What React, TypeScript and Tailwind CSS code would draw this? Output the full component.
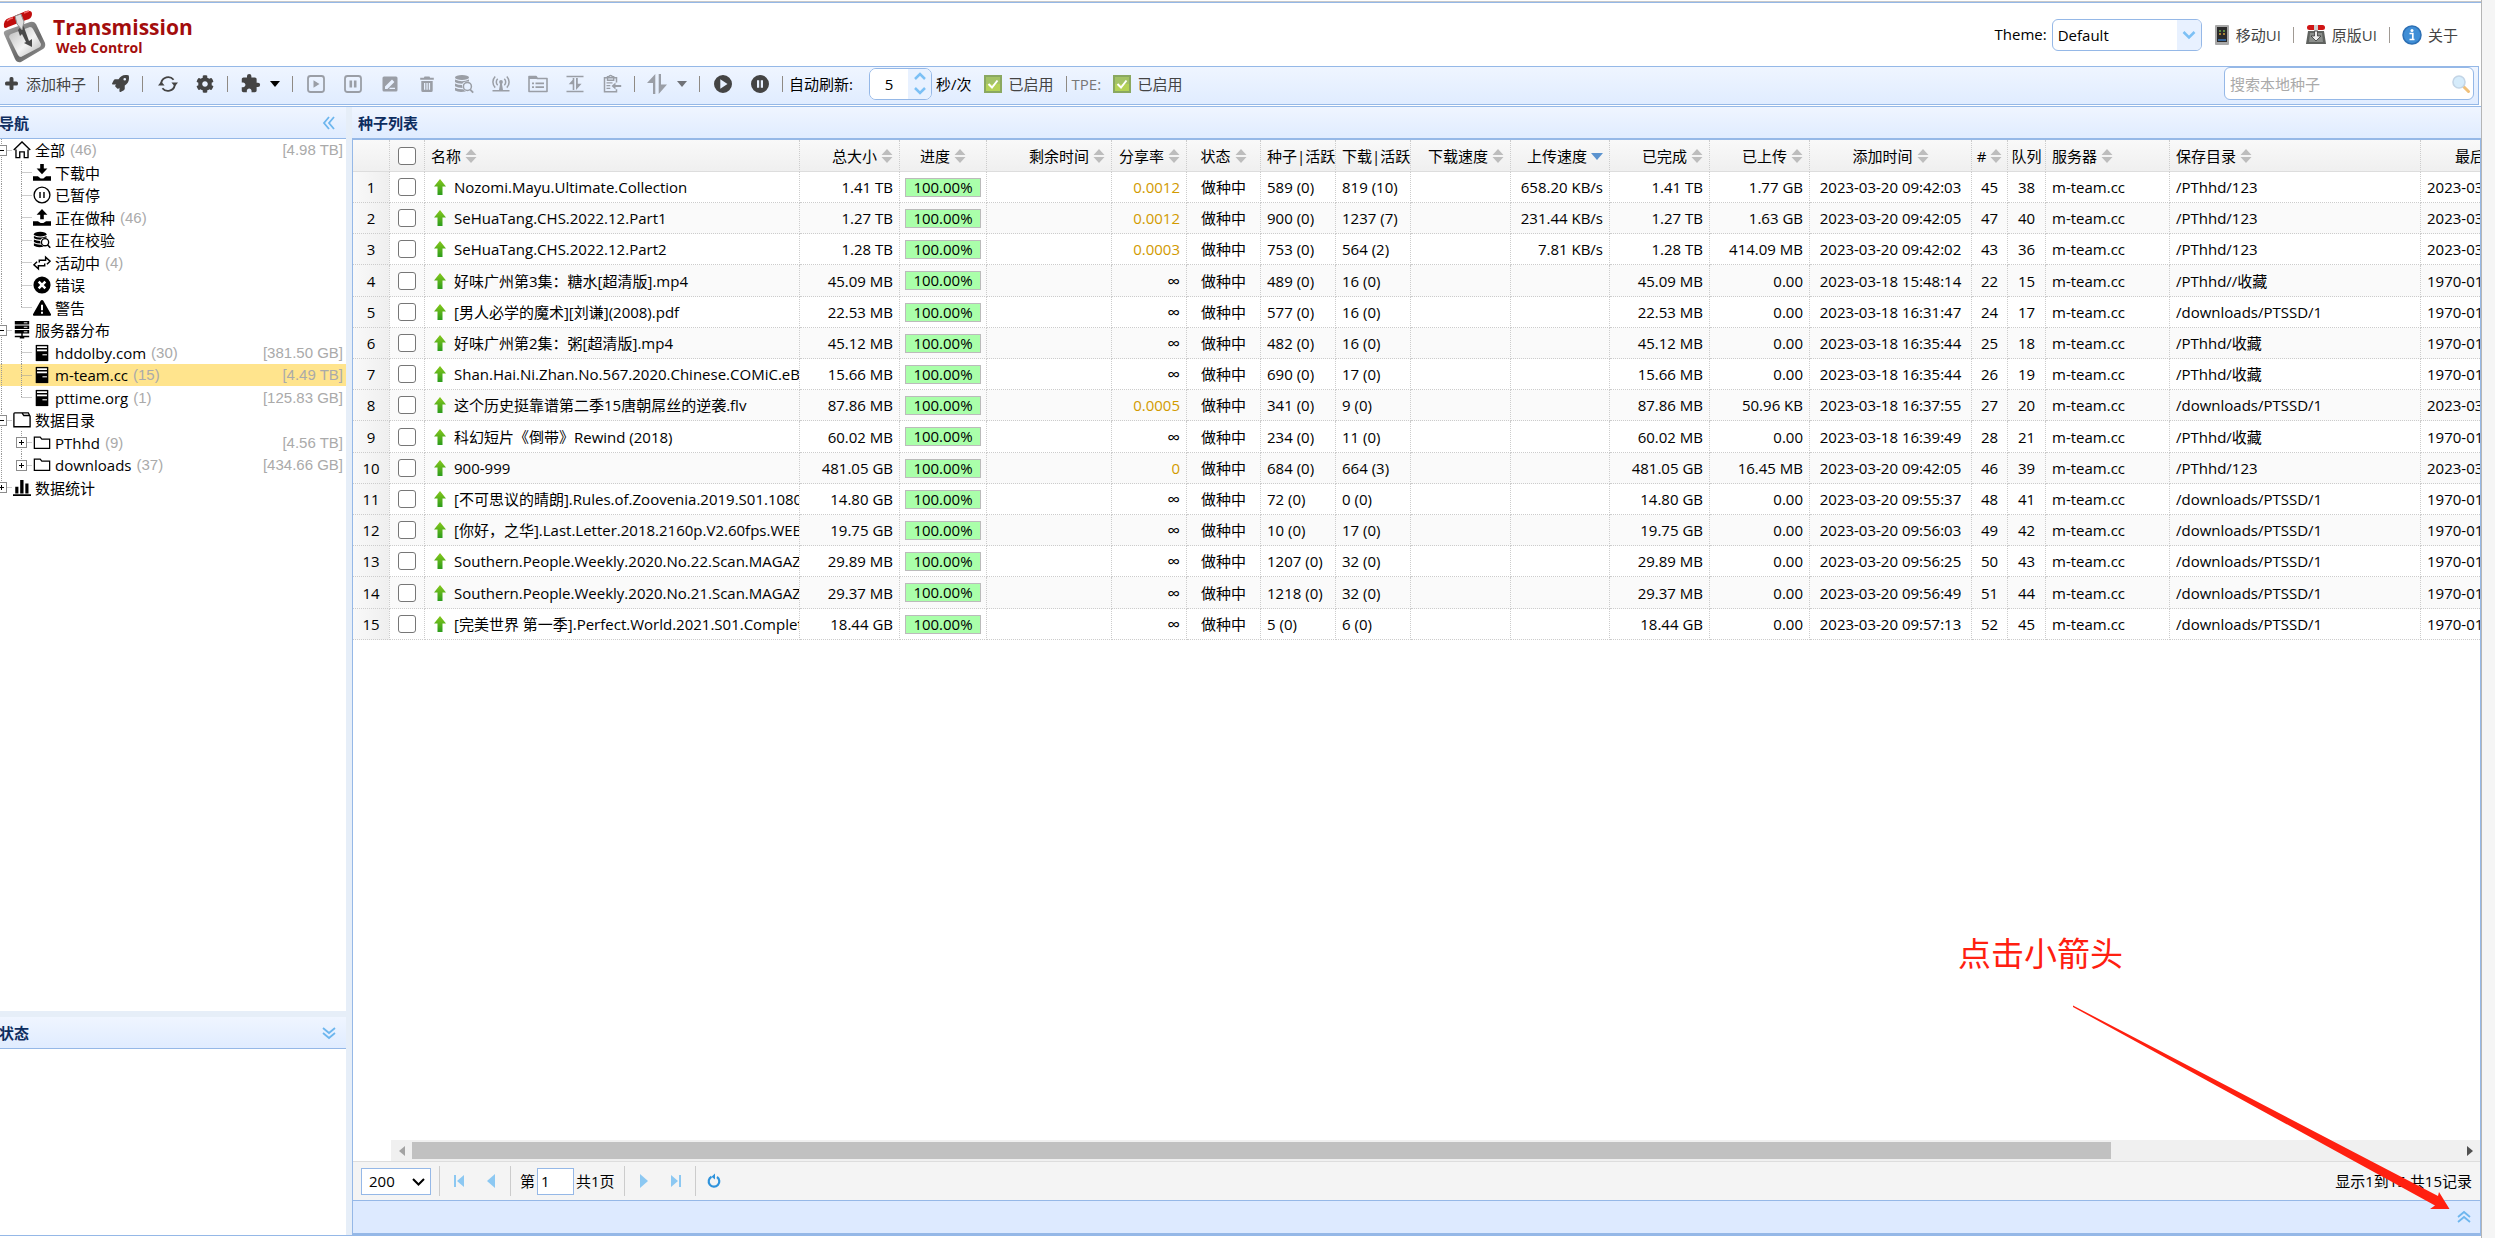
import React from "react";
import { FaCog, FaPlus, FaRocket } from "react-icons/fa";
import { MdExtension } from "react-icons/md";

type Align = "left" | "center" | "right";

/* ---------- icons ---------- */

function Icon({ size = 20, children }: { size?: number; children: React.ReactNode }) {
  return (
    <svg width={size} height={size} viewBox="0 0 20 20" fill="currentColor" className="block shrink-0" aria-hidden="true">
      {children}
    </svg>
  );
}

const icons = {
  refresh: (
    <Icon>
      <g fill="none" stroke="currentColor" strokeWidth="1.8">
        <path d="M3.2 9A7 7 0 0 1 15.6 5.800" />
        <path d="M16.800 11A7 7 0 0 1 4.400 14.200" />
      </g>
      <path d="M0 11.500 3.200 7.500l3.400 4zM20 8.500 16.800 12.500l-3.400-4z" />
    </Icon>
  ),
  play: (
    <Icon>
      <rect x="2" y="2" width="16" height="16" rx="2.5" fill="none" stroke="currentColor" strokeWidth="1.8" />
      <path d="M7.5 6.2v7.6l6-3.8z" />
    </Icon>
  ),
  pause: (
    <Icon>
      <rect x="2" y="2" width="16" height="16" rx="2.5" fill="none" stroke="currentColor" strokeWidth="1.8" />
      <path d="M6.5 6.5h2.6v7H6.5zM10.9 6.5h2.6v7h-2.6z" />
    </Icon>
  ),
  edit: (
    <Icon>
      <path fillRule="evenodd" d="M4 2.5h12A1.5 1.5 0 0 1 17.5 4v12a1.5 1.5 0 0 1-1.5 1.5H4A1.5 1.5 0 0 1 2.5 16V4A1.5 1.5 0 0 1 4 2.500zM5 12.600V15h2.400l7-7L12 5.600zM9.500 13.700V15H15v-1.300z" />
    </Icon>
  ),
  trash: (
    <Icon>
      <path fillRule="evenodd" d="M7.500 2.500h5l.6 1.300h3.700v2H3.200v-2h3.700zM4.300 7h11.400v9.500a1.500 1.500 0 0 1-1.500 1.500H5.800a1.500 1.500 0 0 1-1.500-1.500zM7 9v6.800h1.300V9zm2.400 0v6.800h1.300V9zm2.400 0v6.800h1.300V9z" />
    </Icon>
  ),
  recheck: (
    <Icon>
      <ellipse cx="8" cy="3.500" rx="7" ry="2.600" />
      <path d="M1 5.500q7 3.500 14 0v2Q9.500 7 8.300 9.700 3 9.500 1 8zM1 9.500q3 1.600 7 1.600 0 1.800.6 2.900Q3.500 14 1 12.300zM1 13.700q3.500 1.700 8.300 1.500 1 1.500 2.600 2.300Q4.500 18.800 1 16.500z" />
      <circle cx="13.400" cy="12.400" r="4" fill="none" stroke="currentColor" strokeWidth="1.500" />
      <path d="m16 15.300 3.200 3.300" stroke="currentColor" strokeWidth="1.800" />
    </Icon>
  ),
  tracker: (
    <Icon>
      <circle cx="10" cy="8" r="1.900" />
      <path d="M9.200 9h1.600l1.200 7h6.500v1.500h-17V16H8z" />
      <g fill="none" stroke="currentColor" strokeWidth="1.500">
        <path d="M6.700 11.300a4.600 4.600 0 0 1 0-6.600M13.300 4.700a4.600 4.600 0 0 1 0 6.600M4.200 13.600a8 8 0 0 1 0-11.200M15.800 2.400a8 8 0 0 1 0 11.200" />
      </g>
    </Icon>
  ),
  attributes: (
    <Icon>
      <path d="M1 17.500V2.500h7l1.300 2H19v13z" fill="none" stroke="currentColor" strokeWidth="1.600" strokeLinejoin="round" />
      <path d="M1 2.500h7l1.300 2.500H1zM4 8.500h2v1.700H4zM7.500 8.500H16v1.700H7.500zM4 12.300h2V14H4zM7.500 12.300H16V14H7.500z" />
    </Icon>
  ),
  location: (
    <Icon>
      <path d="M1.500 1.700h17v1.500h-17zM1.500 16.800h17v1.500h-17zM7.700 4v12H9.300V4zM9.300 4 3.700 10.300h5.600zM11 4v12l5.600-6.300h-3.800V4z" />
    </Icon>
  ),
  paste: (
    <Icon>
      <path d="M14.500 8.500V3.800h-12v14h12v-2.500" fill="none" stroke="currentColor" strokeWidth="1.500" />
      <path d="M5.500 2.800h1.300a1.900 1.900 0 0 1 3.600 0h1.300v3.400H5.500z" fill="none" stroke="currentColor" strokeWidth="1.400" />
      <path d="M4.500 8.200h6v1.200h-6zM4.500 11h3.800v1.200H4.500zM4.500 13.800h3.800V15H4.500zM9.500 12l4-3.600v2.500h5.700v2.200h-5.700v2.500z" />
    </Icon>
  ),
  queue: (
    <Icon>
      <path d="M8.300 0v20H6V9H0zM11.700 0v20L20 10.500h-6V0z" />
    </Icon>
  ),
  playAll: (
    <Icon>
      <path fillRule="evenodd" d="M10 1a9 9 0 1 0 0 18 9 9 0 0 0 0-18zM7.300 5.200 14.500 10l-7.200 4.800z" />
    </Icon>
  ),
  pauseAll: (
    <Icon>
      <path fillRule="evenodd" d="M10 1a9 9 0 1 0 0 18 9 9 0 0 0 0-18zM7 6.300h2.200v7.400H7zm3.800 0H13v7.400h-2.200z" />
    </Icon>
  ),
  home: (
    <Icon size={18}>
      <path d="M.8 10 10 1l9.200 9M3.300 9.500v9h4.200V12h5v6.500h4.200v-9" fill="none" stroke="currentColor" strokeWidth="1.500" />
    </Icon>
  ),
  download: (
    <Icon size={18}>
      <path d="M8 0h4v5h4l-6 6.500L4 5h4zM0 13.500h5.500l3 2.500h3l3-2.500H20v5H0z" />
    </Icon>
  ),
  paused: (
    <Icon size={18}>
      <circle cx="10" cy="10" r="8.800" fill="none" stroke="currentColor" strokeWidth="1.500" />
      <path d="M7 6.700h1.600v6.600H7zM11.400 6.700H13v6.600h-1.600z" />
    </Icon>
  ),
  upload: (
    <Icon size={18}>
      <path d="M8 11.500h4v-5h4L10 0 4 6.500h4zM0 13.500h5.500l3 2h3l3-2H20v5H0z" />
    </Icon>
  ),
  active: (
    <Icon size={18}>
      <path d="M7 9.500V7h7V3.500L19 8l-3.500 3.500M13 10.500V13H6v3.500L1 12l3.500-3.500" fill="none" stroke="currentColor" strokeWidth="1.600" />
    </Icon>
  ),
  error: (
    <Icon size={18}>
      <circle cx="10" cy="10" r="9.500" />
      <path d="m6.300 6.300 7.400 7.400m0-7.400-7.400 7.400" stroke="#fff" strokeWidth="2.800" />
    </Icon>
  ),
  warning: (
    <Icon size={18}>
      <path d="M10 1q1 0 1.500 1L20 17q.5 1.500-1 1.500H1Q-.5 18.500 0 17L8.500 2Q9 1 10 1z" />
      <path d="M10 6.500v6m0 1.800v2.200" stroke="#fff" strokeWidth="2.200" />
    </Icon>
  ),
  servers: (
    <Icon size={18}>
      <path d="M2 0h16v4H2zM2 5h16v4H2zM2 10h16v4H2zM9.200 14h1.600v2.500H18v1.500h-5.500v1.500h-5V18H2v-1.500h7.200z" />
      <path d="M12 2h4M12 7h4M12 12h4" stroke="#fff" strokeWidth="1" />
    </Icon>
  ),
  server: (
    <Icon size={18}>
      <path d="M3 1h14v18H3z" />
      <path d="M4.500 3.500h11M4.500 7h11" stroke="#fff" strokeWidth="2" />
      <path d="M10.500 12h5" stroke="#fff" strokeWidth="1.200" />
    </Icon>
  ),
  folderOpen: (
    <Icon size={18}>
      <path d="M1 17.500V3q0-1 1-1h8l2 3h6q1 0 1 1v11.500zM10 2h7l1.500 3" fill="none" stroke="currentColor" strokeWidth="1.500" />
    </Icon>
  ),
  folder: (
    <Icon size={18}>
      <path d="M1.500 16V3.500H8l1.800 2.200h8.700V16z" fill="none" stroke="currentColor" strokeWidth="1.400" />
    </Icon>
  ),
  stats: (
    <Icon size={18}>
      <path d="M2.500 8.500H6V16H2.500zM8 1h3.700v15H8zM13.700 5h3.500v11h-3.500zM0 17h20v1.800H0z" />
    </Icon>
  ),
};

function Logo() {
  return (
    <svg width="46" height="54" viewBox="0 0 46 54" className="block" aria-hidden="true">
      <defs>
        <linearGradient id="logoPlate" x1="0" y1="0" x2="1" y2="1">
          <stop offset="0" stopColor="#b9b9b9" />
          <stop offset="0.55" stopColor="#f4f4f4" />
          <stop offset="1" stopColor="#b5b5b5" />
        </linearGradient>
        <linearGradient id="logoFrame" x1="0" y1="0" x2="1" y2="1">
          <stop offset="0" stopColor="#a8a8a8" />
          <stop offset="0.6" stopColor="#6a6a6a" />
          <stop offset="1" stopColor="#9a9a9a" />
        </linearGradient>
      </defs>
      <path d="M6 20 29 12q4-1 6 2l9 19q1 4-2 6L20 52q-4 1-6-3L3 24q-1-3 3-4z" fill="url(#logoFrame)" />
      <path d="m10 24 19-7q2 0 3 2l8 15q0 2-1 3L20 47q-2 0-3-2L8 27q0-2 2-3z" fill="url(#logoPlate)" />
      <path d="m17 20 5-6 2 6 4 11 3-2v8l-8-4 2-1-4-8-2 2z" fill="#4a4a4a" />
      <path d="M3 17q-1-7 5-9l3-1 14-6q6-1 6 3 0 5-6 6L7 17q-3 2-4 0z" fill="#c00d0d" />
      <path d="M6 11q3-3 6-3M23 3l5-2" stroke="#f26a6a" strokeWidth="1.500" fill="none" />
      <path d="m14 6 6-2 3 8-2 8-5-6z" fill="#dedede" stroke="#8f8f8f" />
    </svg>
  );
}

function Chevrons({ dir }: { dir: "left" | "up" | "down" }) {
  const d = {
    left: "M8 2 3 8l5 6M13 2 8 8l5 6",
    up: "M2 8l6-5 6 5M2 13l6-5 6 5",
    down: "M2 3l6 5 6-5M2 8l6 5 6-5",
  }[dir];
  return (
    <svg width="16" height="16" viewBox="0 0 16 16" className="block" aria-hidden="true">
      <path d={d} fill="none" stroke="#6db6ee" strokeWidth="1.800" />
    </svg>
  );
}

function SortIcon({ active }: { active?: boolean }) {
  return (
    <svg width="12" height="14" viewBox="0 0 12 14" className="block shrink-0" aria-hidden="true">
      {active ? <path d="M0 4h12L6 11z" fill="#5b93cf" /> : <path d="M6 0l5.500 6H.5zM6 14l5.500-6H.5z" fill="#bdbdbd" />}
    </svg>
  );
}

function UpArrow() {
  return (
    <svg width="12" height="16" viewBox="0 0 12 16" className="block shrink-0" aria-hidden="true">
      <defs>
        <linearGradient id="seedArrow" x1="0" y1="0" x2="0" y2="1">
          <stop offset="0" stopColor="#86c81b" />
          <stop offset="1" stopColor="#2c9c1c" />
        </linearGradient>
      </defs>
      <path d="M6 0 12 7.500H8.500V16h-5V7.500H0z" fill="url(#seedArrow)" />
    </svg>
  );
}

function TickBox() {
  return (
    <svg width="18" height="18" viewBox="0 0 18 18" className="block" aria-hidden="true">
      <rect x="1" y="1" width="16" height="16" fill="#b4d257" stroke="#8aa860" strokeWidth="2" />
      <rect x="2" y="2" width="14" height="7" fill="#a3c266" />
      <path d="m4.500 9 3.500 3.500 5.500-7" fill="none" stroke="#fff" strokeWidth="2" />
    </svg>
  );
}

/* ---------- header ---------- */

function HeaderLink({ icon, text }: { icon: React.ReactNode; text: string }) {
  return (
    <a href="#" className="flex items-center gap-[6px] text-[#444]">
      {icon}
      {text}
    </a>
  );
}

function Sep() {
  return <span className="mx-[12px] h-[16px] w-px shrink-0 bg-[#a09a94]" />;
}

function Header() {
  return (
    <header className="flex h-[63px] shrink-0 items-start justify-between pl-px pr-[23px]">
      <div className="flex items-start gap-[6px] pt-[7px]">
        <Logo />
        <h1 className="pt-[6px] font-bold text-[#a30d0d]">
          <span className="block text-[21px] leading-[23px]">Transmission</span>
          <span className="block pl-[3px] text-[14px] leading-[18px]">Web Control</span>
        </h1>
      </div>
      <div className="flex items-center pt-[16px]">
        <label htmlFor="theme" className="mr-[5px] pb-[3px]">
          Theme:
        </label>
        <div className="relative mr-[12px] h-[32px] w-[150px] overflow-hidden rounded-[6px] border border-[#95b8e7] bg-white">
          <select id="theme" className="h-full w-full appearance-none bg-transparent pl-[5px] outline-none">
            <option>Default</option>
          </select>
          <span className="pointer-events-none absolute inset-y-0 right-0 flex w-[24px] items-center justify-center bg-[#e8f1ff]">
            <svg width="14" height="10" viewBox="0 0 14 10" aria-hidden="true">
              <path d="m1.500 2 5.500 5.500L12.500 2" fill="none" stroke="#7cc0f5" strokeWidth="2.500" />
            </svg>
          </span>
        </div>
        <HeaderLink
          text="移动UI"
          icon={
            <svg width="16" height="20" viewBox="0 0 16 20" aria-hidden="true">
              <rect x="1" width="14" height="20" rx="1" fill="#a9a9a9" />
              <rect x="3" y="2" width="10" height="15" fill="#2b2b2b" />
              <path d="M5 6h2M9 6h2" stroke="#6fae4c" strokeWidth="1.500" />
              <path d="M5 9h2M9 9h2" stroke="#d7a23c" strokeWidth="1.500" />
              <path d="M4 15h8" stroke="#3c7cc4" strokeWidth="1.500" />
            </svg>
          }
        />
        <Sep />
        <HeaderLink
          text="原版UI"
          icon={
            <svg width="20" height="20" viewBox="0 0 20 20" aria-hidden="true">
              <path d="M2 6h16l2 13H0z" fill="#5f625f" />
              <path d="M4 8h12l1 9H3z" fill="#8b8e8b" />
              <rect x="1" width="18" height="5" rx="2.500" fill="#d01515" />
              <rect x="8" width="4" height="10" fill="#cfcfcf" />
              <path d="M8.500 6h3v5H15l-5 5-5-5h3.500z" fill="#eee" stroke="#333" strokeWidth=".8" />
            </svg>
          }
        />
        <Sep />
        <HeaderLink
          text="关于"
          icon={
            <svg width="20" height="20" viewBox="0 0 20 20" aria-hidden="true">
              <circle cx="10" cy="10" r="9" fill="#3f8ed6" stroke="#2c6fb4" strokeWidth="1.500" />
              <circle cx="10" cy="5.500" r="1.500" fill="#fff" />
              <path d="M7.500 8.500h3.300v6h1.700M7.500 14.500h5" fill="none" stroke="#fff" strokeWidth="1.700" />
            </svg>
          }
        />
      </div>
    </header>
  );
}

/* ---------- toolbar ---------- */

function Tool({ label, children, disabled }: { label: string; children: React.ReactNode; disabled?: boolean }) {
  return (
    <button
      type="button"
      aria-label={label}
      disabled={disabled}
      className="flex h-[28px] w-[37px] shrink-0 items-center justify-center text-[#444] disabled:text-[#9a9ea6]"
    >
      {children}
    </button>
  );
}

function Bar() {
  return <span className="h-[16px] w-px shrink-0 bg-[#8f8a84]" />;
}

function Caret({ color }: { color: string }) {
  return (
    <svg width="10" height="6" viewBox="0 0 10 6" className="block shrink-0" aria-hidden="true">
      <path d="M0 0h10L5 6z" fill={color} />
    </svg>
  );
}

function Toolbar() {
  return (
    <div className="mr-[2px] flex h-[39px] shrink-0 items-center border-y border-r border-[#95b8e7] bg-linear-to-b from-[#eff5ff] to-[#e0ecff] pb-[4px]">
      <button type="button" className="ml-[5px] mr-[12px] flex items-center gap-[8px] text-[#444]">
        <FaPlus size={13} strokeWidth={60} stroke="currentColor" />
        添加种子
      </button>
      <Bar />
      <div className="mx-[3px]">
        <Tool label="插件">
          <FaRocket size={17} />
        </Tool>
      </div>
      <Bar />
      <div className="ml-[6px] mr-[4px] flex">
        <Tool label="刷新">{icons.refresh}</Tool>
        <Tool label="设置">
          <FaCog size={18} />
        </Tool>
      </div>
      <Bar />
      <button type="button" aria-label="扩展" className="mx-[12px] flex items-center gap-[9px] text-[#444]">
        <MdExtension size={21} />
        <Caret color="#000" />
      </button>
      <Bar />
      <div className="mx-[4px] flex">
        <Tool label="开始" disabled>{icons.play}</Tool>
        <Tool label="暂停" disabled>{icons.pause}</Tool>
        <Tool label="重命名" disabled>{icons.edit}</Tool>
        <Tool label="删除" disabled>{icons.trash}</Tool>
        <Tool label="校验" disabled>{icons.recheck}</Tool>
        <Tool label="获取更多节点" disabled>{icons.tracker}</Tool>
        <Tool label="属性" disabled>{icons.attributes}</Tool>
        <Tool label="变更目录" disabled>{icons.location}</Tool>
        <Tool label="复制路径" disabled>{icons.paste}</Tool>
      </div>
      <Bar />
      <button type="button" aria-label="队列" disabled className="mx-[12px] flex items-center gap-[10px] text-[#9a9ea6]">
        {icons.queue}
        <Caret color="#707277" />
      </button>
      <Bar />
      <div className="mx-[4px] flex">
        <Tool label="全部开始">{icons.playAll}</Tool>
        <Tool label="全部暂停">{icons.pauseAll}</Tool>
      </div>
      <Bar />
      <label htmlFor="interval" className="ml-[6px] mr-[4px] w-[76px] whitespace-nowrap">
        自动刷新:
      </label>
      <div className="mr-[4px] flex h-[32px] w-[63px] shrink-0 overflow-hidden rounded-[7px] border border-[#95b8e7] bg-white">
        <input id="interval" defaultValue="5" className="w-[38px] bg-white text-center outline-none" />
        <div className="flex flex-1 flex-col bg-[#e8f1ff]">
          <button type="button" aria-label="增加" className="flex flex-1 items-center justify-center">
            <svg width="14" height="10" viewBox="0 0 14 10" aria-hidden="true">
              <path d="M2 8l5-5 5 5" fill="none" stroke="#7cc0f5" strokeWidth="2.500" />
            </svg>
          </button>
          <button type="button" aria-label="减少" className="flex flex-1 items-center justify-center">
            <svg width="14" height="10" viewBox="0 0 14 10" aria-hidden="true">
              <path d="M2 2l5 5 5-5" fill="none" stroke="#7cc0f5" strokeWidth="2.500" />
            </svg>
          </button>
        </div>
      </div>
      <span className="mr-[12px] whitespace-nowrap">秒/次</span>
      <button type="button" className="mr-[12px] flex items-center gap-[7px] whitespace-nowrap text-[#444]">
        <TickBox />
        已启用
      </button>
      <Bar />
      <span className="ml-[5px] mr-[11px] w-[30px] whitespace-nowrap text-[#777]">TPE:</span>
      <button type="button" className="flex items-center gap-[7px] whitespace-nowrap text-[#444]">
        <TickBox />
        已启用
      </button>
      <div className="ml-auto mr-[4px] flex h-[33px] w-[250px] items-center rounded-[6px] border border-[#95b8e7] bg-white pr-[2px]">
        <input
          aria-label="搜索本地种子"
          placeholder="搜索本地种子"
          className="min-w-0 flex-1 bg-transparent pl-[5px] outline-none placeholder:text-[#aaa]"
        />
        <button type="button" aria-label="搜索">
          <svg width="20" height="20" viewBox="0 0 20 20" className="block" aria-hidden="true">
            <path d="m12.500 12.500 5 5" stroke="#f0c07a" strokeWidth="3" strokeLinecap="round" />
            <circle cx="8" cy="8" r="6" fill="#d6ecfb" stroke="#c3d5e6" strokeWidth="1.600" />
          </svg>
        </button>
      </div>
    </div>
  );
}

/* ---------- navigation tree ---------- */

type Node = {
  level: 0 | 1;
  icon: React.ReactNode;
  text: string;
  count?: number;
  size?: string;
  box?: "plus" | "minus";
  last?: boolean;
  selected?: boolean;
};

const nodes: Node[] = [
  { level: 0, icon: icons.home, text: "全部", count: 46, size: "4.98 TB", box: "minus" },
  { level: 1, icon: icons.download, text: "下载中" },
  { level: 1, icon: icons.paused, text: "已暂停" },
  { level: 1, icon: icons.upload, text: "正在做种", count: 46 },
  { level: 1, icon: icons.recheck, text: "正在校验" },
  { level: 1, icon: icons.active, text: "活动中", count: 4 },
  { level: 1, icon: icons.error, text: "错误" },
  { level: 1, icon: icons.warning, text: "警告", last: true },
  { level: 0, icon: icons.servers, text: "服务器分布", box: "minus" },
  { level: 1, icon: icons.server, text: "hddolby.com", count: 30, size: "381.50 GB" },
  { level: 1, icon: icons.server, text: "m-team.cc", count: 15, size: "4.49 TB", selected: true },
  { level: 1, icon: icons.server, text: "pttime.org", count: 1, size: "125.83 GB", last: true },
  { level: 0, icon: icons.folderOpen, text: "数据目录", box: "minus" },
  { level: 1, icon: icons.folder, text: "PThhd", count: 9, size: "4.56 TB", box: "plus" },
  { level: 1, icon: icons.folder, text: "downloads", count: 37, size: "434.66 GB", box: "plus", last: true },
  { level: 0, icon: icons.stats, text: "数据统计", box: "plus", last: true },
];

function TreeLines({ level, box, last }: Pick<Node, "level" | "box" | "last">) {
  const w = level === 0 ? 12 : 32;
  const x = level === 0 ? 1 : 21;
  return (
    <svg width={w} height="23" viewBox={`0 0 ${w} 23`} className="block shrink-0" aria-hidden="true">
      <g stroke="#999" strokeDasharray="1 1" fill="none">
        {level === 1 && <path d="M1.500 0v23" />}
        <path d={last ? `M${x}.5 0v11` : `M${x}.5 0v23`} />
        <path d={`M${x}.5 11.500H${w}`} />
      </g>
      {box && (
        <g fill="none">
          <rect x={x - 5 + 0.5} y="6.500" width="10" height="10" fill="#fff" stroke="#8c8c8c" />
          <path d={`M${x - 2} 11.500h5`} stroke="#000" />
          {box === "plus" && <path d={`M${x}.5 9v5`} stroke="#000" />}
        </g>
      )}
    </svg>
  );
}

function NavTree() {
  return (
    <ul className="flex-1 overflow-hidden bg-white">
      {nodes.map((n) => (
        <li
          key={n.text}
          className={`flex h-[22px] items-center overflow-hidden pr-[3px] leading-[22px] even:h-[23px] ${n.selected ? "bg-[#ffe48d]" : ""}`}
        >
          <TreeLines level={n.level} box={n.box} last={n.last} />
          <span className="flex w-[20px] shrink-0 items-center justify-center text-black">
            <span className="[&>svg]:size-[18px]">{n.icon}</span>
          </span>
          <span className="ml-[3px]">{n.text}</span>
          {n.count !== undefined && (
            <span className="ml-[5px] font-['Liberation_Sans',sans-serif] text-[#aaa]">({n.count})</span>
          )}
          {n.size && <span className="ml-auto font-['Liberation_Sans',sans-serif] text-[#aaa]">[{n.size}]</span>}
        </li>
      ))}
    </ul>
  );
}

function PanelTitle({ title, children, flush }: { title: string; children?: React.ReactNode; flush?: boolean }) {
  return (
    <div
      className={`flex h-[32px] shrink-0 items-center justify-between border-b border-[#95b8e7] bg-linear-to-b from-[#eff5ff] to-[#e0ecff] pr-[9px] ${flush ? "" : "pl-[6px]"}`}
    >
      <h2 className={`font-bold text-[#0e2d5f] ${flush ? "-ml-px" : ""}`}>{title}</h2>
      {children}
    </div>
  );
}

function Sidebar() {
  return (
    <aside className="flex w-[346px] shrink-0 flex-col">
      <nav className="flex min-h-0 flex-1 flex-col">
        <PanelTitle title="导航" flush>
          <button type="button" aria-label="收起导航">
            <Chevrons dir="left" />
          </button>
        </PanelTitle>
        <NavTree />
      </nav>
      <div className="h-[6px] shrink-0 bg-[#e6eef8]" />
      <section className="flex h-[218px] shrink-0 flex-col bg-white">
        <PanelTitle title="状态" flush>
          <button type="button" aria-label="收起状态">
            <Chevrons dir="down" />
          </button>
        </PanelTitle>
      </section>
    </aside>
  );
}

/* ---------- torrent table ---------- */

type Column = { title: string; width: string; align: Align; sort?: "none" | "desc" };

const columns: Column[] = [
  { title: "名称", width: "w-[375px]", align: "left", sort: "none" },
  { title: "总大小", width: "w-[100px]", align: "right", sort: "none" },
  { title: "进度", width: "w-[87px]", align: "center", sort: "none" },
  { title: "剩余时间", width: "w-[125px]", align: "right", sort: "none" },
  { title: "分享率", width: "w-[75px]", align: "right", sort: "none" },
  { title: "状态", width: "w-[74px]", align: "center", sort: "none" },
  { title: "种子|活跃", width: "w-[75px]", align: "left" },
  { title: "下载|活跃", width: "w-[75px]", align: "left" },
  { title: "下载速度", width: "w-[100px]", align: "right", sort: "none" },
  { title: "上传速度", width: "w-[99px]", align: "right", sort: "desc" },
  { title: "已完成", width: "w-[100px]", align: "right", sort: "none" },
  { title: "已上传", width: "w-[100px]", align: "right", sort: "none" },
  { title: "添加时间", width: "w-[162px]", align: "center", sort: "none" },
  { title: "#", width: "w-[36px]", align: "center", sort: "none" },
  { title: "队列", width: "w-[38px]", align: "center" },
  { title: "服务器", width: "w-[124px]", align: "left", sort: "none" },
  { title: "保存目录", width: "w-[251px]", align: "left", sort: "none" },
  { title: "最后活动时间", width: "w-[175px]", align: "center", sort: "none" },
];

// name, size, ratio, seeds, peers, upload speed, uploaded, added, id, queue, folder, last activity
const torrents: string[][] = [
  ["Nozomi.Mayu.Ultimate.Collection", "1.41 TB", "0.0012", "589 (0)", "819 (10)", "658.20 KB/s", "1.77 GB", "2023-03-20 09:42:03", "45", "38", "/PThhd/123", "2023-03-20"],
  ["SeHuaTang.CHS.2022.12.Part1", "1.27 TB", "0.0012", "900 (0)", "1237 (7)", "231.44 KB/s", "1.63 GB", "2023-03-20 09:42:05", "47", "40", "/PThhd/123", "2023-03-20"],
  ["SeHuaTang.CHS.2022.12.Part2", "1.28 TB", "0.0003", "753 (0)", "564 (2)", "7.81 KB/s", "414.09 MB", "2023-03-20 09:42:02", "43", "36", "/PThhd/123", "2023-03-20"],
  ["好味广州第3集：糖水[超清版].mp4", "45.09 MB", "∞", "489 (0)", "16 (0)", "", "0.00", "2023-03-18 15:48:14", "22", "15", "/PThhd//收藏", "1970-01-01"],
  ["[男人必学的魔术][刘谦](2008).pdf", "22.53 MB", "∞", "577 (0)", "16 (0)", "", "0.00", "2023-03-18 16:31:47", "24", "17", "/downloads/PTSSD/1", "1970-01-01"],
  ["好味广州第2集：粥[超清版].mp4", "45.12 MB", "∞", "482 (0)", "16 (0)", "", "0.00", "2023-03-18 16:35:44", "25", "18", "/PThhd/收藏", "1970-01-01"],
  ["Shan.Hai.Ni.Zhan.No.567.2020.Chinese.COMiC.eBook", "15.66 MB", "∞", "690 (0)", "17 (0)", "", "0.00", "2023-03-18 16:35:44", "26", "19", "/PThhd/收藏", "1970-01-01"],
  ["这个历史挺靠谱第二季15唐朝屌丝的逆袭.flv", "87.86 MB", "0.0005", "341 (0)", "9 (0)", "", "50.96 KB", "2023-03-18 16:37:55", "27", "20", "/downloads/PTSSD/1", "2023-03-20"],
  ["科幻短片《倒带》Rewind (2018)", "60.02 MB", "∞", "234 (0)", "11 (0)", "", "0.00", "2023-03-18 16:39:49", "28", "21", "/PThhd/收藏", "1970-01-01"],
  ["900-999", "481.05 GB", "0", "684 (0)", "664 (3)", "", "16.45 MB", "2023-03-20 09:42:05", "46", "39", "/PThhd/123", "2023-03-20"],
  ["[不可思议的晴朗].Rules.of.Zoovenia.2019.S01.1080p", "14.80 GB", "∞", "72 (0)", "0 (0)", "", "0.00", "2023-03-20 09:55:37", "48", "41", "/downloads/PTSSD/1", "1970-01-01"],
  ["[你好，之华].Last.Letter.2018.2160p.V2.60fps.WEB-DL", "19.75 GB", "∞", "10 (0)", "17 (0)", "", "0.00", "2023-03-20 09:56:03", "49", "42", "/downloads/PTSSD/1", "1970-01-01"],
  ["Southern.People.Weekly.2020.No.22.Scan.MAGAZINE", "29.89 MB", "∞", "1207 (0)", "32 (0)", "", "0.00", "2023-03-20 09:56:25", "50", "43", "/downloads/PTSSD/1", "1970-01-01"],
  ["Southern.People.Weekly.2020.No.21.Scan.MAGAZINE", "29.37 MB", "∞", "1218 (0)", "32 (0)", "", "0.00", "2023-03-20 09:56:49", "51", "44", "/downloads/PTSSD/1", "1970-01-01"],
  ["[完美世界 第一季].Perfect.World.2021.S01.Complete", "18.44 GB", "∞", "5 (0)", "6 (0)", "", "0.00", "2023-03-20 09:57:13", "52", "45", "/downloads/PTSSD/1", "1970-01-01"],
];

const textAlign: Record<Align, string> = { left: "text-left", center: "text-center", right: "text-right" };
const justify: Record<Align, string> = { left: "justify-start", center: "justify-center", right: "justify-end" };

const cellBorder = "border-b border-r border-dotted border-[#ccc]";

function Cell({ align, children, className = "" }: { align: Align; children?: React.ReactNode; className?: string }) {
  return <td className={`overflow-hidden whitespace-nowrap px-[6px] ${cellBorder} ${textAlign[align]} ${className}`}>{children}</td>;
}

function Tick({ label }: { label: string }) {
  return (
    <input
      type="checkbox"
      aria-label={label}
      className="mx-auto block size-[18px] appearance-none rounded-[3px] border border-[#767676] bg-white"
    />
  );
}

function headPadding(c: Column) {
  if (c.title === "#" || c.title === "队列") return "px-[3px]";
  return c.sort ? "px-[6px]" : "pl-[6px]";
}

function TorrentTable() {
  return (
    <table className="w-[2243px] table-fixed border-separate border-spacing-0 leading-[20px]">
      <colgroup>
        <col className="w-[37px]" />
        <col className="w-[35px]" />
        {columns.map((c) => (
          <col key={c.title} className={c.width} />
        ))}
      </colgroup>
      <thead>
        <tr className="h-[32px] bg-linear-to-b from-[#f9f9f9] to-[#efefef]">
          <th aria-label="行号" className="border-b border-r border-b-[#ddd] border-r-[#ccc] [border-right-style:dotted]" />
          <th className="border-b border-r border-b-[#ddd] border-r-[#ccc] [border-right-style:dotted]">
            <Tick label="全选" />
          </th>
          {columns.map((c) => (
            <th
              key={c.title}
              className={`overflow-hidden whitespace-nowrap border-b border-r border-b-[#ddd] border-r-[#ccc] font-normal [border-right-style:dotted] ${headPadding(c)}`}
            >
              <span className={`flex items-center gap-[4px] ${justify[c.align]}`}>
                {c.title}
                {c.sort && <SortIcon active={c.sort === "desc"} />}
              </span>
            </th>
          ))}
        </tr>
      </thead>
      <tbody>
        {torrents.map((t, i) => (
          <tr key={t[0]} className="h-[31px] even:bg-[#fafafa] nth-[5n+4]:h-[32px]">
            <td className={`bg-linear-to-r from-[#f9f9f9] to-[#efefef] text-center ${cellBorder}`}>{i + 1}</td>
            <td className={cellBorder}>
              <Tick label={t[0]} />
            </td>
            <td className={`overflow-hidden whitespace-nowrap pl-[9px] ${cellBorder}`}>
              <span className="flex items-center gap-[8px]">
                <UpArrow />
                {t[0]}
              </span>
            </td>
            <Cell align="right">{t[1]}</Cell>
            <td className={`px-[5px] ${cellBorder}`}>
              <span className="block h-[19px] border border-[#bbb] bg-[#aaffaa] text-center leading-[17px]">100.00%</span>
            </td>
            <Cell align="right" />
            <Cell align="right" className={t[2] === "∞" ? "text-[18px]" : "text-[#d29a00]"}>
              {t[2]}
            </Cell>
            <Cell align="center">做种中</Cell>
            <Cell align="left">{t[3]}</Cell>
            <Cell align="left">{t[4]}</Cell>
            <Cell align="right" />
            <Cell align="right">{t[5]}</Cell>
            <Cell align="right">{t[1]}</Cell>
            <Cell align="right">{t[6]}</Cell>
            <Cell align="center">{t[7]}</Cell>
            <Cell align="center">{t[8]}</Cell>
            <Cell align="center">{t[9]}</Cell>
            <Cell align="left">m-team.cc</Cell>
            <Cell align="left">{t[10]}</Cell>
            <Cell align="left">{t[11]}</Cell>
          </tr>
        ))}
      </tbody>
    </table>
  );
}

function ScrollBar() {
  return (
    <div className="ml-[38px] flex h-[21px] shrink-0 items-center bg-[#f0f0f0]">
      <button type="button" aria-label="向左滚动" className="flex w-[21px] justify-center">
        <svg width="6" height="10" viewBox="0 0 6 10" aria-hidden="true">
          <path d="M6 0v10L0 5z" fill="#a3a3a3" />
        </svg>
      </button>
      <div className="flex-1">
        <div className="h-[17px] w-[83%] bg-[#c1c1c1]" />
      </div>
      <button type="button" aria-label="向右滚动" className="flex w-[21px] justify-center">
        <svg width="6" height="10" viewBox="0 0 6 10" aria-hidden="true">
          <path d="M0 0v10l6-5z" fill="#505050" />
        </svg>
      </button>
    </div>
  );
}

function PageButton({ label, d }: { label: string; d: string }) {
  return (
    <button type="button" aria-label={label} className="flex w-[32px] justify-center">
      <svg width="14" height="14" viewBox="0 0 14 14" className="block" aria-hidden="true">
        <path d={d} fill="#8cc8f2" />
      </svg>
    </button>
  );
}

function PagerSep() {
  return <span className="h-[30px] w-px shrink-0 bg-[#ccc]" />;
}

function Pager() {
  return (
    <div className="flex h-[39px] shrink-0 items-center border-t border-[#ddd] bg-[#f4f4f4] pl-[8px] pr-[8px]">
      <div className="relative mr-[8px]">
        <select aria-label="每页条数" className="h-[27px] w-[70px] appearance-none border border-[#95b8e7] bg-white pl-[7px] outline-none">
          <option>200</option>
        </select>
        <svg width="13" height="8" viewBox="0 0 13 8" className="pointer-events-none absolute right-[6px] top-[10px]" aria-hidden="true">
          <path d="m1 1 5.500 5.500L12 1" fill="none" stroke="#000" strokeWidth="2" />
        </svg>
      </div>
      <PagerSep />
      <div className="mx-[3px] flex">
        <PageButton label="首页" d="M2 1h2v12H2zM12 1v12L5 7z" />
        <PageButton label="上一页" d="M11 0v14L3 7z" />
      </div>
      <PagerSep />
      <label htmlFor="page" className="ml-[9px] mr-[2px]">
        第
      </label>
      <input id="page" defaultValue="1" className="mr-[2px] h-[27px] w-[37px] border border-[#95b8e7] bg-white pl-[3px] outline-none" />
      <span className="mr-[9px]">共1页</span>
      <PagerSep />
      <div className="mx-[3px] flex">
        <PageButton label="下一页" d="M3 0v14l8-7z" />
        <PageButton label="末页" d="M10 1h2v12h-2zM2 1v12l7-6z" />
      </div>
      <PagerSep />
      <button type="button" aria-label="重新载入" className="ml-[10px]">
        <svg width="16" height="16" viewBox="0 0 16 16" className="block" aria-hidden="true">
          <path d="M11 4a5.300 5.300 0 1 1-5.500-.3" fill="none" stroke="#2f93dc" strokeWidth="2.200" />
          <path d="M5.500 3.800 9 .5v6z" fill="#2f93dc" />
        </svg>
      </button>
      <span className="ml-auto">显示1到15 共15记录</span>
    </div>
  );
}

function Center() {
  return (
    <main className="flex min-w-0 flex-1 flex-col">
      <PanelTitle title="种子列表" />
      <div className="flex min-h-0 flex-1 flex-col border-x border-t border-[#95b8e7]">
        <div className="min-h-0 flex-1 overflow-hidden bg-white">
          <TorrentTable />
        </div>
        <ScrollBar />
        <Pager />
        <div className="flex h-[35px] shrink-0 items-center justify-end border-b-2 border-t border-[#95b8e7] bg-[#ddeaff] pr-[8px]">
          <button type="button" aria-label="展开详情">
            <Chevrons dir="up" />
          </button>
        </div>
      </div>
    </main>
  );
}

/* ---------- annotation ---------- */

function Annotation() {
  return (
    <>
      <p className="absolute bottom-[260px] right-[372px] text-[33px] leading-[48px] text-[#ff2010]">点击小箭头</p>
      <svg width="378" height="206" viewBox="2072 1004 378 206" className="pointer-events-none absolute bottom-[28px] right-[45px]" aria-hidden="true">
        <path d="M2073 1005.500 2438 1196l1-4 10.500 17H2430l5-3.500L2073 1007z" fill="#ff2010" />
      </svg>
    </>
  );
}

export default function App() {
  return (
    <div className="relative flex h-screen overflow-hidden bg-white font-['Open_Sans','Noto_Sans_CJK_SC',sans-serif] text-[15px] leading-[20px] text-black">
      <div className="flex min-w-0 flex-1 flex-col pb-[2px] pt-px">
        <div className="h-px shrink-0 bg-[#c8c8c8]" />
        <div className="flex min-h-0 flex-1 flex-col border-b border-t border-[#95b8e7]">
          <Header />
          <Toolbar />
          <div className="mt-px flex min-h-0 flex-1 border-t border-[#95b8e7]">
            <Sidebar />
            <div className="w-[6px] shrink-0 bg-[#e6eef8]" />
            <Center />
          </div>
        </div>
      </div>
      <div className="w-[14px] shrink-0 border-l border-[#b5b5b5] bg-[#f5f5f5]" />
      <Annotation />
    </div>
  );
}
